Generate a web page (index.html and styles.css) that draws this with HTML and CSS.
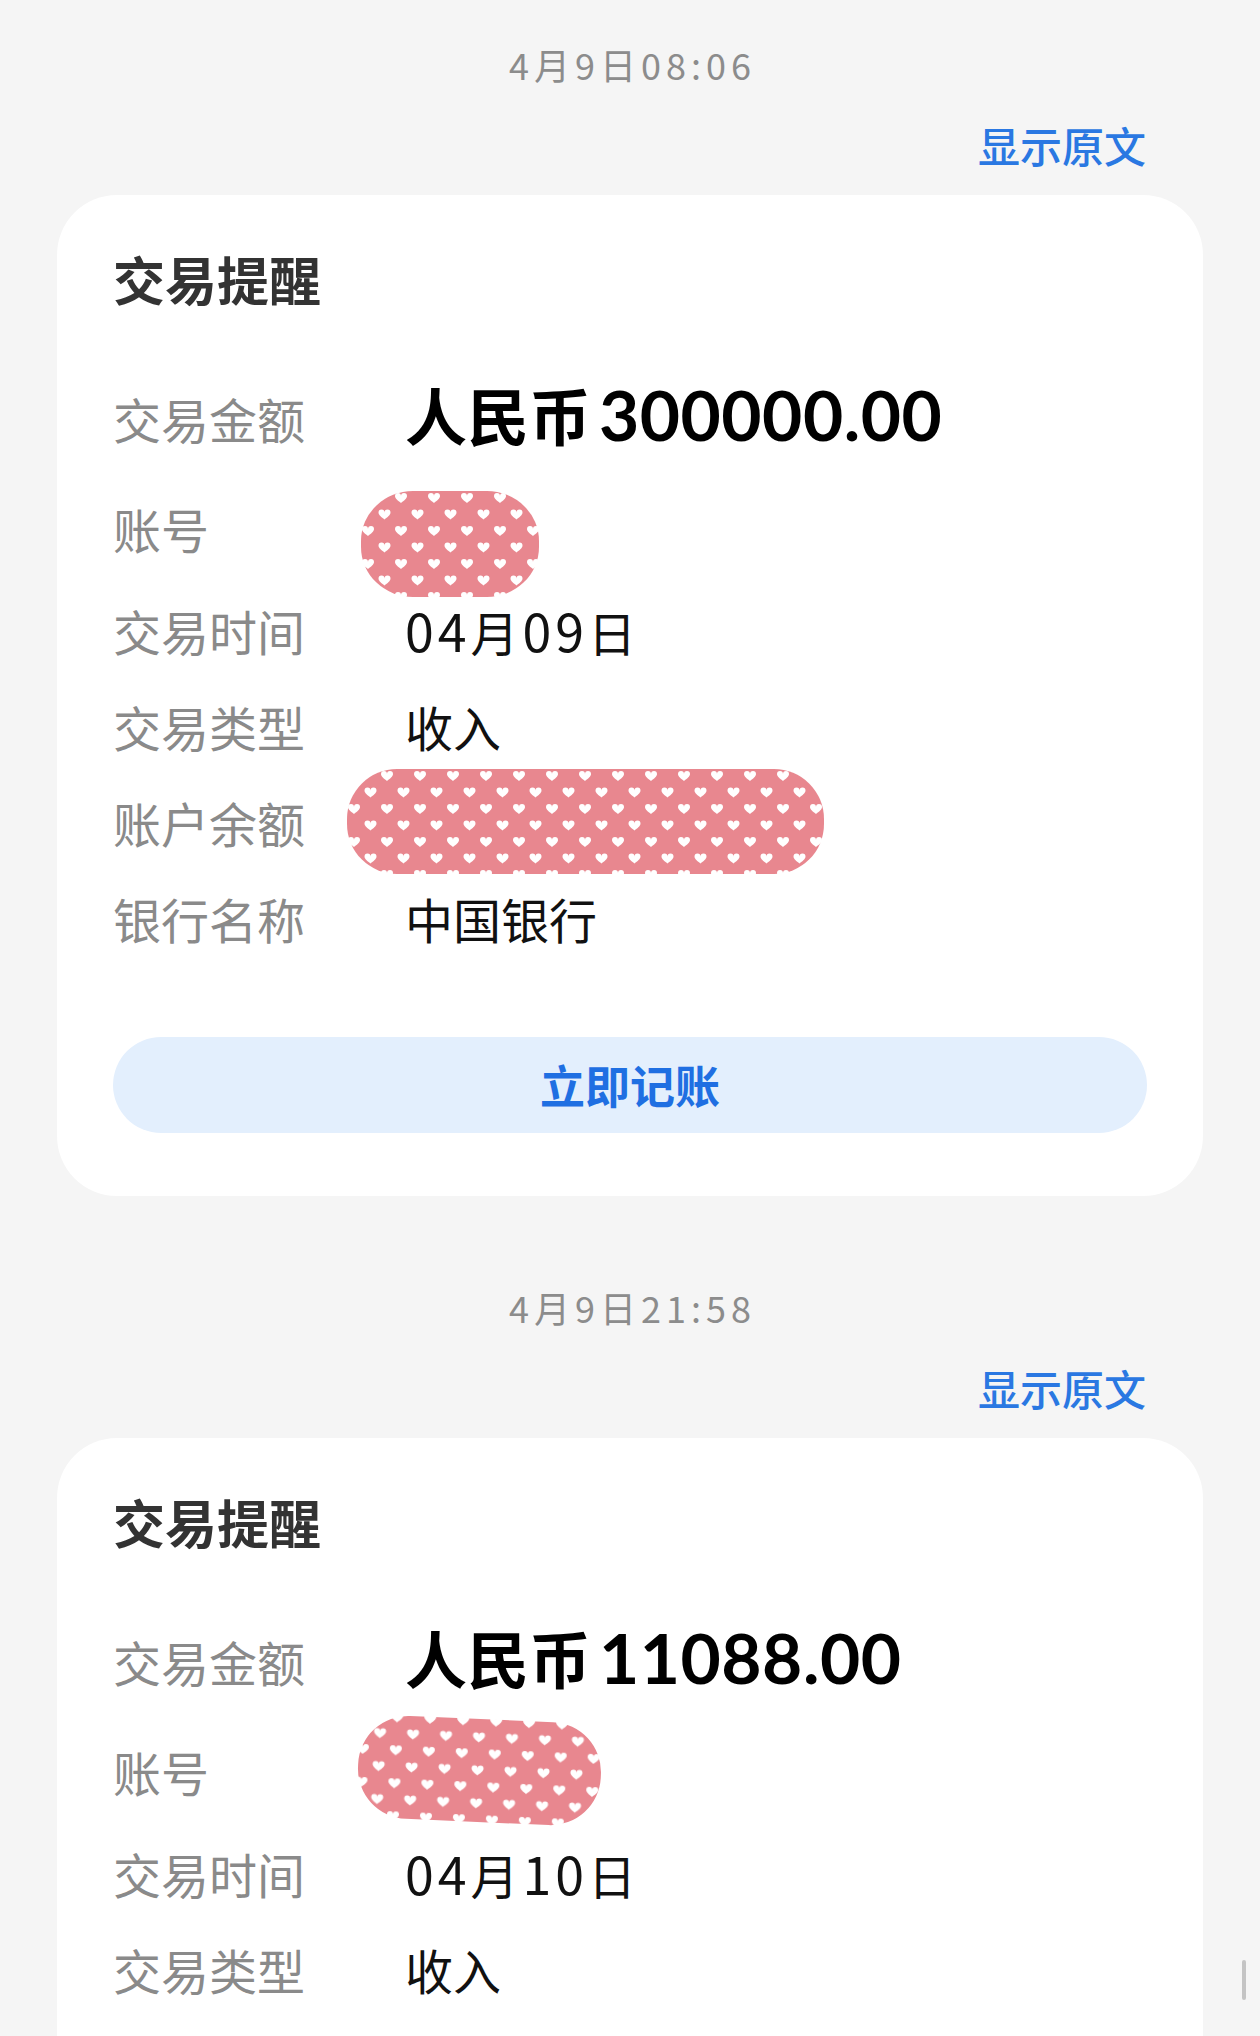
FILE: index.html
```html
<!DOCTYPE html>
<html lang="zh-CN">
<head>
    <meta charset="UTF-8">
    <meta name="viewport" content="width=device-width, initial-scale=1.0">
    <title>交易提醒</title>
    <link rel="stylesheet" href="styles.css">
</head>
<body>
    <!-- shared heart pattern for the redaction marks -->
    <svg class="defs" aria-hidden="true">
        <defs>
            <pattern id="hearts" width="33" height="33" patternUnits="userSpaceOnUse">
                <rect width="33" height="33" fill="#e8878f"/>
                <path d="M6 10C3 7.6 0 5.6 0 3A3 3 0 0 1 6 3A3 3 0 0 1 12 3C12 5.6 9 7.6 6 10Z" fill="#fff" transform="translate(2 3)"/>
                <path d="M6 10C3 7.6 0 5.6 0 3A3 3 0 0 1 6 3A3 3 0 0 1 12 3C12 5.6 9 7.6 6 10Z" fill="#fff" transform="translate(18.5 19.5)"/>
            </pattern>
        </defs>
    </svg>

    <div class="chat">
        <div class="message">
            <div class="time">4月9日08:06</div>
            <div class="source"><a href="#">显示原文</a></div>
            <div class="card">
                <h2 class="card-title">交易提醒</h2>
                <div class="fields">
                    <div class="row row-amount">
                        <span class="label">交易金额</span>
                        <span class="value amount">人民币<span class="num">300000.00</span></span>
                    </div>
                    <div class="row row-account">
                        <span class="label">账号</span>
                        <span class="value"></span>
                        <svg class="mask mask-account" width="180" height="108" viewBox="0 0 180 108">
                            <rect x="1" y="1" width="178" height="106" rx="52" ry="50" fill="url(#hearts)"/>
                        </svg>
                    </div>
                    <div class="row">
                        <span class="label">交易时间</span>
                        <span class="value date"><span class="num">04</span>月<span class="num">09</span>日</span>
                    </div>
                    <div class="row">
                        <span class="label">交易类型</span>
                        <span class="value">收入</span>
                    </div>
                    <div class="row">
                        <span class="label">账户余额</span>
                        <span class="value"></span>
                        <svg class="mask mask-balance" width="479" height="107" viewBox="0 0 479 107">
                            <rect x="1" y="1" width="477" height="105" rx="50" ry="50" fill="url(#hearts)"/>
                        </svg>
                    </div>
                    <div class="row">
                        <span class="label">银行名称</span>
                        <span class="value">中国银行</span>
                    </div>
                </div>
                <button class="book-btn" type="button">立即记账</button>
            </div>
        </div>

        <div class="message">
            <div class="time">4月9日21:58</div>
            <div class="source"><a href="#">显示原文</a></div>
            <!-- the rest of this card is below the fold -->
            <div class="card card-open">
                <h2 class="card-title">交易提醒</h2>
                <div class="fields">
                    <div class="row row-amount">
                        <span class="label">交易金额</span>
                        <span class="value amount">人民币<span class="num">11088.00</span></span>
                    </div>
                    <div class="row row-account">
                        <span class="label">账号</span>
                        <span class="value"></span>
                        <svg class="mask mask-account-2" width="251" height="115" viewBox="0 0 251 115">
                            <rect x="4" y="6" width="243" height="103" rx="50" ry="50" fill="url(#hearts)" transform="rotate(2.5 125 57)"/>
                        </svg>
                    </div>
                    <div class="row">
                        <span class="label">交易时间</span>
                        <span class="value date"><span class="num">04</span>月<span class="num">10</span>日</span>
                    </div>
                    <div class="row">
                        <span class="label">交易类型</span>
                        <span class="value">收入</span>
                    </div>
                </div>
            </div>
        </div>
    </div>

    <div class="scroll-thumb"></div>
</body>
</html>
```

FILE: styles.css
```css
/* General Styles */
html,
body {
    margin: 0;
    height: 100%;
    overflow: hidden;
}

body {
    background: #f5f5f5;
    font-family: "Noto Sans CJK SC", "Noto Sans", sans-serif;
}

.defs {
    position: absolute;
    width: 0;
    height: 0;
}

.chat {
    padding: 0 57px;
}

/* Message block */
.message {
    padding: 39px 0 47px;
}

.time {
    text-align: center;
    font-size: 36px;
    line-height: 50px;
    color: #8c8c8c;
    letter-spacing: 5px;
    text-indent: 5px;
}

.source {
    margin-top: 28px;
    padding-right: 57px;
    text-align: right;
    font-size: 42px;
    line-height: 56px;
}

.source a {
    color: #2a78e2;
    font-weight: 500;
    text-decoration: none;
}

/* Card */
.card {
    margin-top: 22px;
    background: #fff;
    border-radius: 60px;
    padding: 54px 56px 63px;
}

.card-open {
    padding-bottom: 200px;
}

.card-title {
    margin: 0;
    font-size: 52px;
    line-height: 60px;
    font-weight: 700;
    color: #333;
}

.fields {
    margin-top: 53px;
}

.row {
    position: relative;
    display: flex;
    align-items: center;
    height: 96px;
}

.row-amount {
    height: 112px;
}

.row-account {
    height: 108px;
}

.label {
    width: 292px;
    flex-shrink: 0;
    font-size: 48px;
    line-height: 60px;
    color: #8a8a8a;
}

.value {
    font-size: 48px;
    line-height: 60px;
    color: #111;
}

.date {
    letter-spacing: 4px;
}

.amount {
    margin-bottom: 8px;
    font-size: 62px;
    line-height: 80px;
    font-weight: 700;
    color: #000;
}

.num {
    font-size: 1.08em;
}

.amount .num {
    margin-left: 8px;
    font-family: "Lato", "Noto Sans CJK SC", sans-serif;
    font-size: 1.12em;
    letter-spacing: 0.5px;
}

/* Redaction marks */
.mask {
    position: absolute;
}

.mask-account {
    left: 247px;
    top: 16px;
}

.mask-balance {
    left: 233px;
    top: -6px;
}

.mask-account-2 {
    left: 241px;
    top: -4px;
}

/* Button */
.book-btn {
    display: block;
    width: 100%;
    height: 96px;
    margin-top: 71px;
    padding: 0;
    border: none;
    border-radius: 48px;
    background: #e3effd;
    color: #1f6fe2;
    font-family: "Noto Sans CJK SC", sans-serif;
    font-size: 45px;
    font-weight: 700;
    line-height: 96px;
    cursor: pointer;
}

.scroll-thumb {
    position: fixed;
    right: 14px;
    top: 1960px;
    width: 4px;
    height: 40px;
    border-radius: 2px;
    background: #c4c4c4;
}
```
